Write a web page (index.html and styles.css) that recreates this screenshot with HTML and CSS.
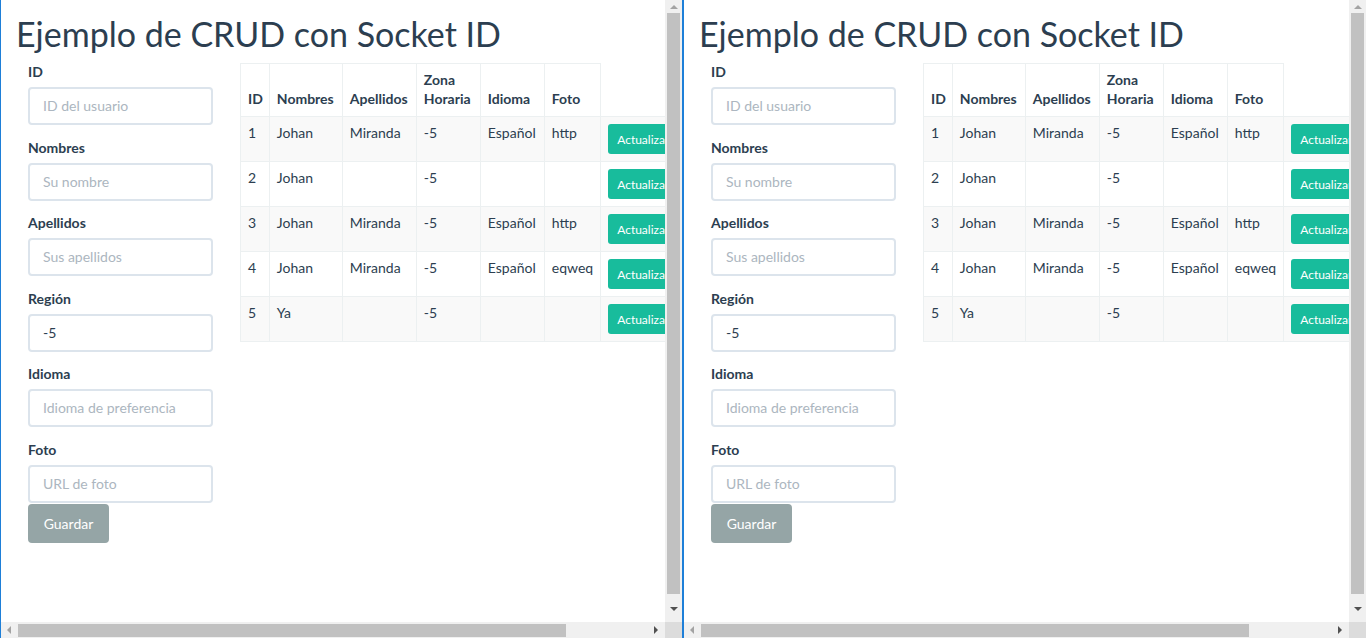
FILE: index.html
```html
<!DOCTYPE html>
<html lang="es">
<head>
<meta charset="utf-8">
<title>Ejemplo de CRUD con Socket ID</title>
<link rel="stylesheet" href="styles.css">
</head>
<body>
<div class="screen">
  <div class="edge"></div>

  <div class="window window-left">
    <div class="window-main">
      <div class="viewport">
        <div class="page">
          <h1 class="title">Ejemplo de CRUD con Socket ID</h1>
          <div class="layout">
            <form class="user-form">
              <div class="field"><label class="field-label">ID</label><input class="field-input" placeholder="ID del usuario"></div>
              <div class="field"><label class="field-label">Nombres</label><input class="field-input" placeholder="Su nombre"></div>
              <div class="field"><label class="field-label">Apellidos</label><input class="field-input" placeholder="Sus apellidos"></div>
              <div class="field"><label class="field-label">Región</label><input class="field-input" value="-5"></div>
              <div class="field"><label class="field-label">Idioma</label><input class="field-input" placeholder="Idioma de preferencia"></div>
              <div class="field field-last"><label class="field-label">Foto</label><input class="field-input" placeholder="URL de foto"></div>
              <button type="button" class="btn-save">Guardar</button>
            </form>
            <table class="users">
              <thead>
                <tr><th class="c-id">ID</th><th class="c-nom">Nombres</th><th class="c-ape">Apellidos</th><th class="c-zona">Zona Horaria</th><th class="c-idi">Idioma</th><th class="c-foto">Foto</th></tr>
              </thead>
              <tbody>
                <tr><td>1</td><td>Johan</td><td>Miranda</td><td>-5</td><td>Español</td><td>http</td><td class="c-act"><button class="btn-upd">Actualizar</button><button class="btn-del">Eliminar</button></td></tr>
                <tr><td>2</td><td>Johan</td><td></td><td>-5</td><td></td><td></td><td class="c-act"><button class="btn-upd">Actualizar</button><button class="btn-del">Eliminar</button></td></tr>
                <tr><td>3</td><td>Johan</td><td>Miranda</td><td>-5</td><td>Español</td><td>http</td><td class="c-act"><button class="btn-upd">Actualizar</button><button class="btn-del">Eliminar</button></td></tr>
                <tr><td>4</td><td>Johan</td><td>Miranda</td><td>-5</td><td>Español</td><td>eqweq</td><td class="c-act"><button class="btn-upd">Actualizar</button><button class="btn-del">Eliminar</button></td></tr>
                <tr><td>5</td><td>Ya</td><td></td><td>-5</td><td></td><td></td><td class="c-act"><button class="btn-upd">Actualizar</button><button class="btn-del">Eliminar</button></td></tr>
              </tbody>
            </table>
          </div>
        </div>
      </div>
      <div class="vscroll">
        <span class="arrow arrow-up off"></span>
        <div class="vthumb"></div>
        <span class="arrow arrow-down"></span>
      </div>
    </div>
    <div class="window-bottom">
      <div class="hscroll">
        <span class="arrow arrow-left off"></span>
        <div class="htrack"><div class="hthumb"></div></div>
        <span class="arrow arrow-right"></span>
      </div>
      <div class="corner"></div>
    </div>
  </div>

  <div class="divider"></div>

  <div class="window window-right">
    <div class="window-main">
      <div class="viewport">
        <div class="page">
          <h1 class="title">Ejemplo de CRUD con Socket ID</h1>
          <div class="layout">
            <form class="user-form">
              <div class="field"><label class="field-label">ID</label><input class="field-input" placeholder="ID del usuario"></div>
              <div class="field"><label class="field-label">Nombres</label><input class="field-input" placeholder="Su nombre"></div>
              <div class="field"><label class="field-label">Apellidos</label><input class="field-input" placeholder="Sus apellidos"></div>
              <div class="field"><label class="field-label">Región</label><input class="field-input" value="-5"></div>
              <div class="field"><label class="field-label">Idioma</label><input class="field-input" placeholder="Idioma de preferencia"></div>
              <div class="field field-last"><label class="field-label">Foto</label><input class="field-input" placeholder="URL de foto"></div>
              <button type="button" class="btn-save">Guardar</button>
            </form>
            <table class="users">
              <thead>
                <tr><th class="c-id">ID</th><th class="c-nom">Nombres</th><th class="c-ape">Apellidos</th><th class="c-zona">Zona Horaria</th><th class="c-idi">Idioma</th><th class="c-foto">Foto</th></tr>
              </thead>
              <tbody>
                <tr><td>1</td><td>Johan</td><td>Miranda</td><td>-5</td><td>Español</td><td>http</td><td class="c-act"><button class="btn-upd">Actualizar</button><button class="btn-del">Eliminar</button></td></tr>
                <tr><td>2</td><td>Johan</td><td></td><td>-5</td><td></td><td></td><td class="c-act"><button class="btn-upd">Actualizar</button><button class="btn-del">Eliminar</button></td></tr>
                <tr><td>3</td><td>Johan</td><td>Miranda</td><td>-5</td><td>Español</td><td>http</td><td class="c-act"><button class="btn-upd">Actualizar</button><button class="btn-del">Eliminar</button></td></tr>
                <tr><td>4</td><td>Johan</td><td>Miranda</td><td>-5</td><td>Español</td><td>eqweq</td><td class="c-act"><button class="btn-upd">Actualizar</button><button class="btn-del">Eliminar</button></td></tr>
                <tr><td>5</td><td>Ya</td><td></td><td>-5</td><td></td><td></td><td class="c-act"><button class="btn-upd">Actualizar</button><button class="btn-del">Eliminar</button></td></tr>
              </tbody>
            </table>
          </div>
        </div>
      </div>
      <div class="vscroll">
        <span class="arrow arrow-up off"></span>
        <div class="vthumb"></div>
        <span class="arrow arrow-down"></span>
      </div>
    </div>
    <div class="window-bottom">
      <div class="hscroll">
        <span class="arrow arrow-left off"></span>
        <div class="htrack"><div class="hthumb"></div></div>
        <span class="arrow arrow-right"></span>
      </div>
      <div class="corner"></div>
    </div>
  </div>
</div>
</body>
</html>
```

FILE: styles.css
```css
* { box-sizing: border-box; }

html, body {
  margin: 0;
  padding: 0;
  width: 1366px;
  height: 638px;
  overflow: hidden;
  background: #ffffff;
}

body {
  font-family: Lato, "Open Sans", "Liberation Sans", sans-serif;
  font-size: 14px;
  line-height: 20px;
  color: #2c3e50;
}

.screen {
  display: flex;
  width: 1366px;
  height: 638px;
}

.edge {
  width: 1px;
  background: #1e7fd8;
  flex: none;
}

.divider {
  width: 2px;
  background: #1e7fd8;
  flex: none;
}

.window {
  display: flex;
  flex-direction: column;
  flex: none;
  height: 638px;
}

.window-left { width: 681px; }
.window-right { width: 682px; }

.window-main {
  display: flex;
  flex: 1;
  min-height: 0;
}

.viewport {
  flex: 1;
  overflow: hidden;
  background: #fff;
}

.page {
  padding: 0 15px;
  width: 780px;
}

.title {
  margin: 16px 0 10px;
  font-size: 34px;
  line-height: 36px;
  font-weight: 400;
  color: #2c3e50;
}

.layout {
  display: flex;
  align-items: flex-start;
  gap: 27px;
  padding-left: 12px;
}

.user-form {
  width: 185px;
  flex: none;
  margin: 0;
}

.field {
  display: flex;
  flex-direction: column;
  margin-bottom: 12.6px;
}

.field-last { margin-bottom: 0; }

.field-label {
  font-weight: 700;
  font-size: 14px;
  line-height: 20px;
  margin-bottom: 5px;
}

.field-input {
  height: 38px;
  width: 185px;
  border: 2px solid #dce4ec;
  border-radius: 4px;
  padding: 0 13px 1px;
  font-family: Lato, "Open Sans", "Liberation Sans", sans-serif;
  font-size: 14px;
  color: #2c3e50;
  background: #fff;
  outline: none;
}

.field-input::placeholder { color: #acb6c0; opacity: 1; }

.btn-save {
  display: block;
  width: 81px;
  height: 39px;
  margin-top: 1px;
  border: none;
  border-radius: 4px;
  background: #95a5a6;
  color: #fff;
  font-family: Lato, "Open Sans", "Liberation Sans", sans-serif;
  font-size: 14px;
  padding: 0;
}

.users {
  border-collapse: collapse;
  flex: none;
  margin-top: 1px;
}

.users th, .users td {
  border: 1px solid #ecf0f1;
  padding: 6px 7px 8px;
  line-height: 19px;
  font-size: 14px;
  text-align: left;
  white-space: nowrap;
}

.users th {
  font-weight: 700;
  vertical-align: bottom;
  white-space: normal;
}

.users td { vertical-align: top; }

.users tbody tr:nth-child(odd) td { background: #f9f9f9; }

.users th.c-id { width: 28px; padding-right: 6px; }
.c-nom { width: 73px; }
.c-ape { width: 74px; }
.c-zona { width: 64px; }
.c-idi { width: 64px; }
.c-foto { width: 56px; }

.users td.c-act { width: 150px; padding: 7px; }

.btn-upd, .btn-del {
  height: 30px;
  border: none;
  border-radius: 3px;
  color: #fff;
  font-family: Lato, "Open Sans", "Liberation Sans", sans-serif;
  font-size: 12px;
  padding: 0 9px;
  vertical-align: top;
}

.btn-upd { background: #18bc9c; }
.btn-del { background: #e74c3c; margin-left: 4px; }

/* scrollbars */
.vscroll {
  width: 17px;
  flex: none;
  background: #f0f0f0;
  display: flex;
  flex-direction: column;
  align-items: center;
}

.vthumb {
  width: 13px;
  margin: 0 auto;
  height: 581px;
  background: #c1c1c1;
}

.window-bottom {
  display: flex;
  height: 16px;
  flex: none;
}

.hscroll {
  flex: 1;
  background: #f0f0f0;
  display: flex;
  align-items: center;
}

.htrack {
  flex: 1;
  height: 16px;
  display: flex;
  align-items: center;
}

.hthumb {
  width: 548px;
  height: 13px;
  background: #c1c1c1;
  margin-top: 1px;
}

.corner {
  width: 17px;
  background: #dcdcdc;
  flex: none;
}

.arrow {
  display: block;
  width: 0;
  height: 0;
  flex: none;
}

.arrow-up {
  margin: 5px 0 4px;
  border-left: 4px solid transparent;
  border-right: 4px solid transparent;
  border-bottom: 4px solid #505050;
}

.arrow-down {
  margin: 13px 0 0;
  border-left: 4px solid transparent;
  border-right: 4px solid transparent;
  border-top: 4px solid #505050;
}

.arrow-left {
  margin: 0 7px 0 6px;
  border-top: 4px solid transparent;
  border-bottom: 4px solid transparent;
  border-right: 4px solid #505050;
}

.arrow-right {
  margin: 0 7px 0 6px;
  border-top: 4px solid transparent;
  border-bottom: 4px solid transparent;
  border-left: 4px solid #505050;
}

.arrow.off.arrow-up { border-bottom-color: #a3a3a3; }
.arrow.off.arrow-left { border-right-color: #a3a3a3; }
```
